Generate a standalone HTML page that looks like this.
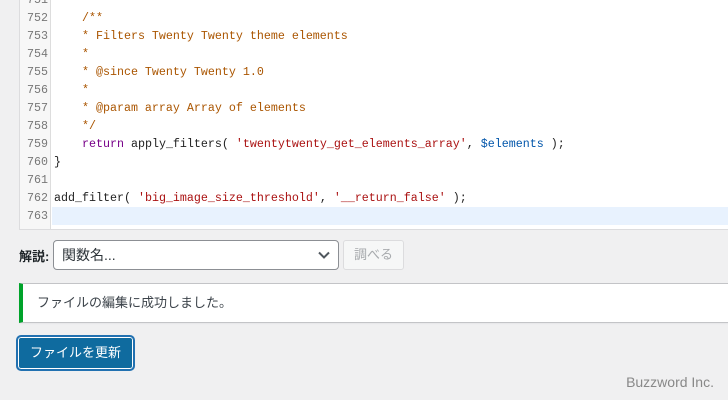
<!DOCTYPE html>
<html><head><meta charset="utf-8"><style>
*{margin:0;padding:0;box-sizing:border-box}
body{width:728px;height:400px;background:#f0f0f1;position:relative;overflow:hidden;font-family:"Liberation Sans","Noto Sans CJK JP",sans-serif}
#ed{position:absolute;left:19px;top:-10px;width:720px;height:240px;background:#fff;border:1px solid #dcdcde}
#gut{position:absolute;left:0;top:0;width:31px;height:100%;background:#f7f7f7;border-right:1px solid #ddd}
.ln{position:absolute;left:0;height:18px;line-height:18px;font-family:"Liberation Mono",monospace;font-size:11.67px;white-space:pre;color:#222}
.n{width:30px;text-align:right;color:#777;padding-right:2px}
.c{left:34px}
.cm{color:#aa5500}.kw{color:#770088}.st{color:#aa1111}.v{color:#0055aa}
</style></head><body>
<div id="ed">
<div style="position:absolute;left:32px;top:216px;width:700px;height:18px;background:#e8f2fe"></div>
<div id="gut"></div>
<div class="ln n" style="top:0">751</div>
<div class="ln n" style="top:18px">752</div><div class="ln c cm" style="top:18px">    /**</div>
<div class="ln n" style="top:36px">753</div><div class="ln c cm" style="top:36px">    * Filters Twenty Twenty theme elements</div>
<div class="ln n" style="top:54px">754</div><div class="ln c cm" style="top:54px">    *</div>
<div class="ln n" style="top:72px">755</div><div class="ln c cm" style="top:72px">    * @since Twenty Twenty 1.0</div>
<div class="ln n" style="top:90px">756</div><div class="ln c cm" style="top:90px">    *</div>
<div class="ln n" style="top:108px">757</div><div class="ln c cm" style="top:108px">    * @param array Array of elements</div>
<div class="ln n" style="top:126px">758</div><div class="ln c cm" style="top:126px">    */</div>
<div class="ln n" style="top:144px">759</div><div class="ln c" style="top:144px">    <span class="kw">return</span> apply_filters( <span class="st">'twentytwenty_get_elements_array'</span>, <span class="v">$elements</span> );</div>
<div class="ln n" style="top:162px">760</div><div class="ln c" style="top:162px">}</div>
<div class="ln n" style="top:180px">761</div>
<div class="ln n" style="top:198px">762</div><div class="ln c" style="top:198px">add_filter( <span class="st">'big_image_size_threshold'</span>, <span class="st">'__return_false'</span> );</div>
<div class="ln n" style="top:216px">763</div>
</div>
<div style="position:absolute;left:19px;top:246px;font-size:13px;font-weight:bold;color:#1d2327">解説:</div>
<div style="position:absolute;left:53px;top:240px;width:286px;height:30px;background:#fff;border:1px solid #8c8f94;border-radius:4px;font-size:14px;color:#2c3338;padding:5px 8px;line-height:18px">関数名...
<svg style="position:absolute;right:8px;top:10px" width="12" height="8" viewBox="0 0 12 8"><path d="M1 1.5l5 5 5-5" fill="none" stroke="#50575e" stroke-width="2"/></svg></div>
<div style="position:absolute;left:343px;top:240px;width:61px;height:30px;background:#f6f7f7;border:1px solid #dcdcde;border-radius:3px;font-size:13px;color:#a7aaad;text-align:center;line-height:28px">調べる</div>
<div style="position:absolute;left:19px;top:283px;width:720px;height:40px;background:#fff;border:1px solid #c3c4c7;border-left:4px solid #00a32a;box-shadow:0 1px 1px rgba(0,0,0,.04);font-size:13px;color:#3c434a;padding-left:14px;line-height:38px">ファイルの編集に成功しました。</div>
<div style="position:absolute;left:17px;top:336px;width:117px;height:34px;border-radius:4px;background:#0f6b9f;border:1px solid #2271b1;box-shadow:0 0 0 1px #fff inset,0 0 0 1px #2271b1;color:#fff;font-size:13px;text-align:center;line-height:32px">ファイルを更新</div>
<div style="position:absolute;right:14px;top:374px;font-size:14px;color:#888">Buzzword Inc.</div>
</body></html>
